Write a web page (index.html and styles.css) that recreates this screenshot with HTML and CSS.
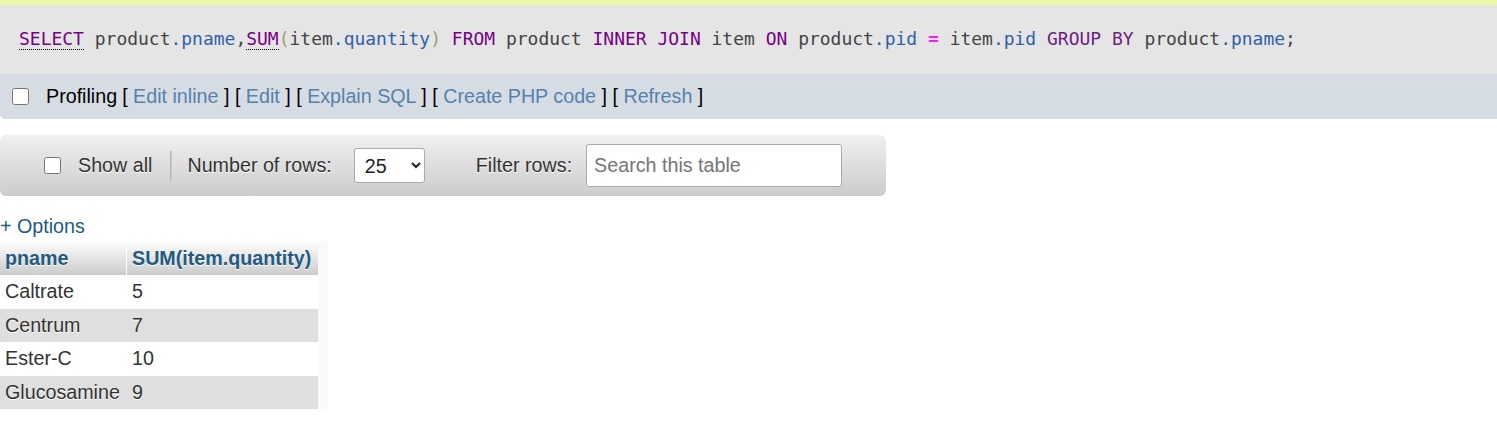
FILE: index.html
```html
<!DOCTYPE html>
<html>
<head>
<meta charset="utf-8">
<link rel="stylesheet" href="styles.css">
</head>
<body>
<div class="topstrip"></div>
<div class="sql"><code><span class="kw doc">SELECT</span> <span class="v">product</span><span class="f">.pname</span>,<span class="kw doc">SUM</span><span class="p">(</span><span class="v">item</span><span class="f">.quantity</span><span class="p">)</span> <span class="kw">FROM</span> <span class="v">product</span> <span class="kw">INNER</span> <span class="kw">JOIN</span> <span class="v">item</span> <span class="kw">ON</span> <span class="v">product</span><span class="f">.pid</span> <span class="op">=</span> <span class="v">item</span><span class="f">.pid</span> <span class="kw2">GROUP</span> <span class="kw2">BY</span> <span class="v">product</span><span class="f">.pname</span>;</code></div>
<div class="profiling">
  <input type="checkbox" class="cb">
  <span class="plabel">Profiling</span>
  <span class="tools">[ <a>Edit inline</a> ] [ <a>Edit</a> ] [ <a>Explain SQL</a> ] [ <a>Create PHP code</a> ] [ <a>Refresh</a> ]</span>
</div>
<div class="navbar">
  <label class="showall"><input type="checkbox" class="cb"> Show all</label>
  <span class="sep"></span>
  <span class="lbl">Number of rows:</span>
  <select class="rows"><option>25</option></select>
  <span class="lbl filter">Filter rows:</span>
  <input class="search" type="text" placeholder="Search this table">
</div>
<div class="options">+ Options</div>
<table class="data">
  <thead>
    <tr><th class="c1">pname</th><th class="c2">SUM(item.quantity)</th></tr>
  </thead>
  <tbody>
    <tr class="odd"><td>Caltrate</td><td>5</td></tr>
    <tr class="even"><td>Centrum</td><td>7</td></tr>
    <tr class="odd"><td>Ester-C</td><td>10</td></tr>
    <tr class="even"><td>Glucosamine</td><td>9</td></tr>
  </tbody>
</table>
</body>
</html>
```
FILE: styles.css
```css
html, body {
  margin: 0;
  padding: 0;
  background: #fff;
}
body {
  font-family: "Liberation Sans", Arial, sans-serif;
  font-size: 19.7px;
  color: #444;
}
.topstrip {
  height: 5px;
  background: #ebf8a6;
}
.sql {
  height: 69px;
  background: #e5e5e5;
  display: flex;
  align-items: center;
  padding-left: 19px;
}
.sql code {
  font-family: "DejaVu Sans Mono", "Liberation Mono", monospace;
  font-size: 17.98px;
  color: #444;
  white-space: pre;
  line-height: 24px;
  position: relative;
  top: -1px;
}
.kw { color: #770088; }
.kw2 { color: #6d1f80; }
.doc { border-bottom: 1px dotted #000; }
.v { color: #444; }
.f { color: #2f5fae; }
.p { color: #a09a7e; }
.op { color: #ee22ee; font-weight: bold; }

.profiling {
  height: 45px;
  background: #d6dce3;
  display: flex;
  align-items: center;
  padding-left: 12px;
  border-bottom-left-radius: 5px;
  color: #000;
}
.cb {
  width: 17px;
  height: 17px;
  margin: 0;
}
.plabel { margin-left: 17px; }
.tools { margin-left: 5px; white-space: pre; }
.tools a { color: #5582ad; }

.navbar {
  margin-top: 16px;
  width: 886px;
  height: 61px;
  border-radius: 6px;
  background: linear-gradient(#f0f0f0, #cccccc);
  display: flex;
  align-items: center;
  box-sizing: border-box;
  padding-left: 44px;
  color: #333;
  text-shadow: 0 1px 0 #fff;
}
.showall { display: flex; align-items: center; gap: 17px; }
.sep {
  width: 2px;
  height: 30px;
  background: linear-gradient(to right, #aaa, #c9d7ea);
  margin-left: 18px;
  margin-right: 15px;
}
.rows {
  margin-left: 22px;
  width: 71px;
  height: 35px;
  font-family: "Liberation Sans", Arial, sans-serif;
  font-size: 19.7px;
  color: #222;
  background: #fff;
  border: 1px solid #aaa;
  border-radius: 3px;
  padding-left: 6px;
}
.filter { margin-left: 51px; }
.search {
  margin-left: 14px;
  width: 256px;
  height: 43px;
  box-sizing: border-box;
  border: 1px solid #aaa;
  border-radius: 3px;
  font-family: "Liberation Sans", Arial, sans-serif;
  font-size: 19.7px;
  padding: 0 7px;
  background: #fff;
}
.search::placeholder { color: #757575; }

.options {
  margin-top: 18px;
  color: #235a81;
  line-height: 24px;
  height: 27px;
}
.data {
  border-collapse: separate;
  border-spacing: 0;
  background: #fafafa;
  padding-right: 10px;
}
.data th, .data td {
  height: 33.5px;
  padding: 0 5px;
  box-sizing: border-box;
  text-align: left;
  white-space: nowrap;
}
.data th {
  height: 34px;
  background: linear-gradient(#ffffff, #cccccc);
  color: #235a81;
  font-weight: bold;
  text-shadow: 0 1px 0 #fff;
}
.data th.c1 { width: 127px; border-right: 1px solid #fff; }
.data th.c2 { width: 191px; }
.data td { color: #333; text-shadow: 0 1px 0 #fff; }
.odd td { background: #fff; }
.even td { background: #dfdfdf; }
```
